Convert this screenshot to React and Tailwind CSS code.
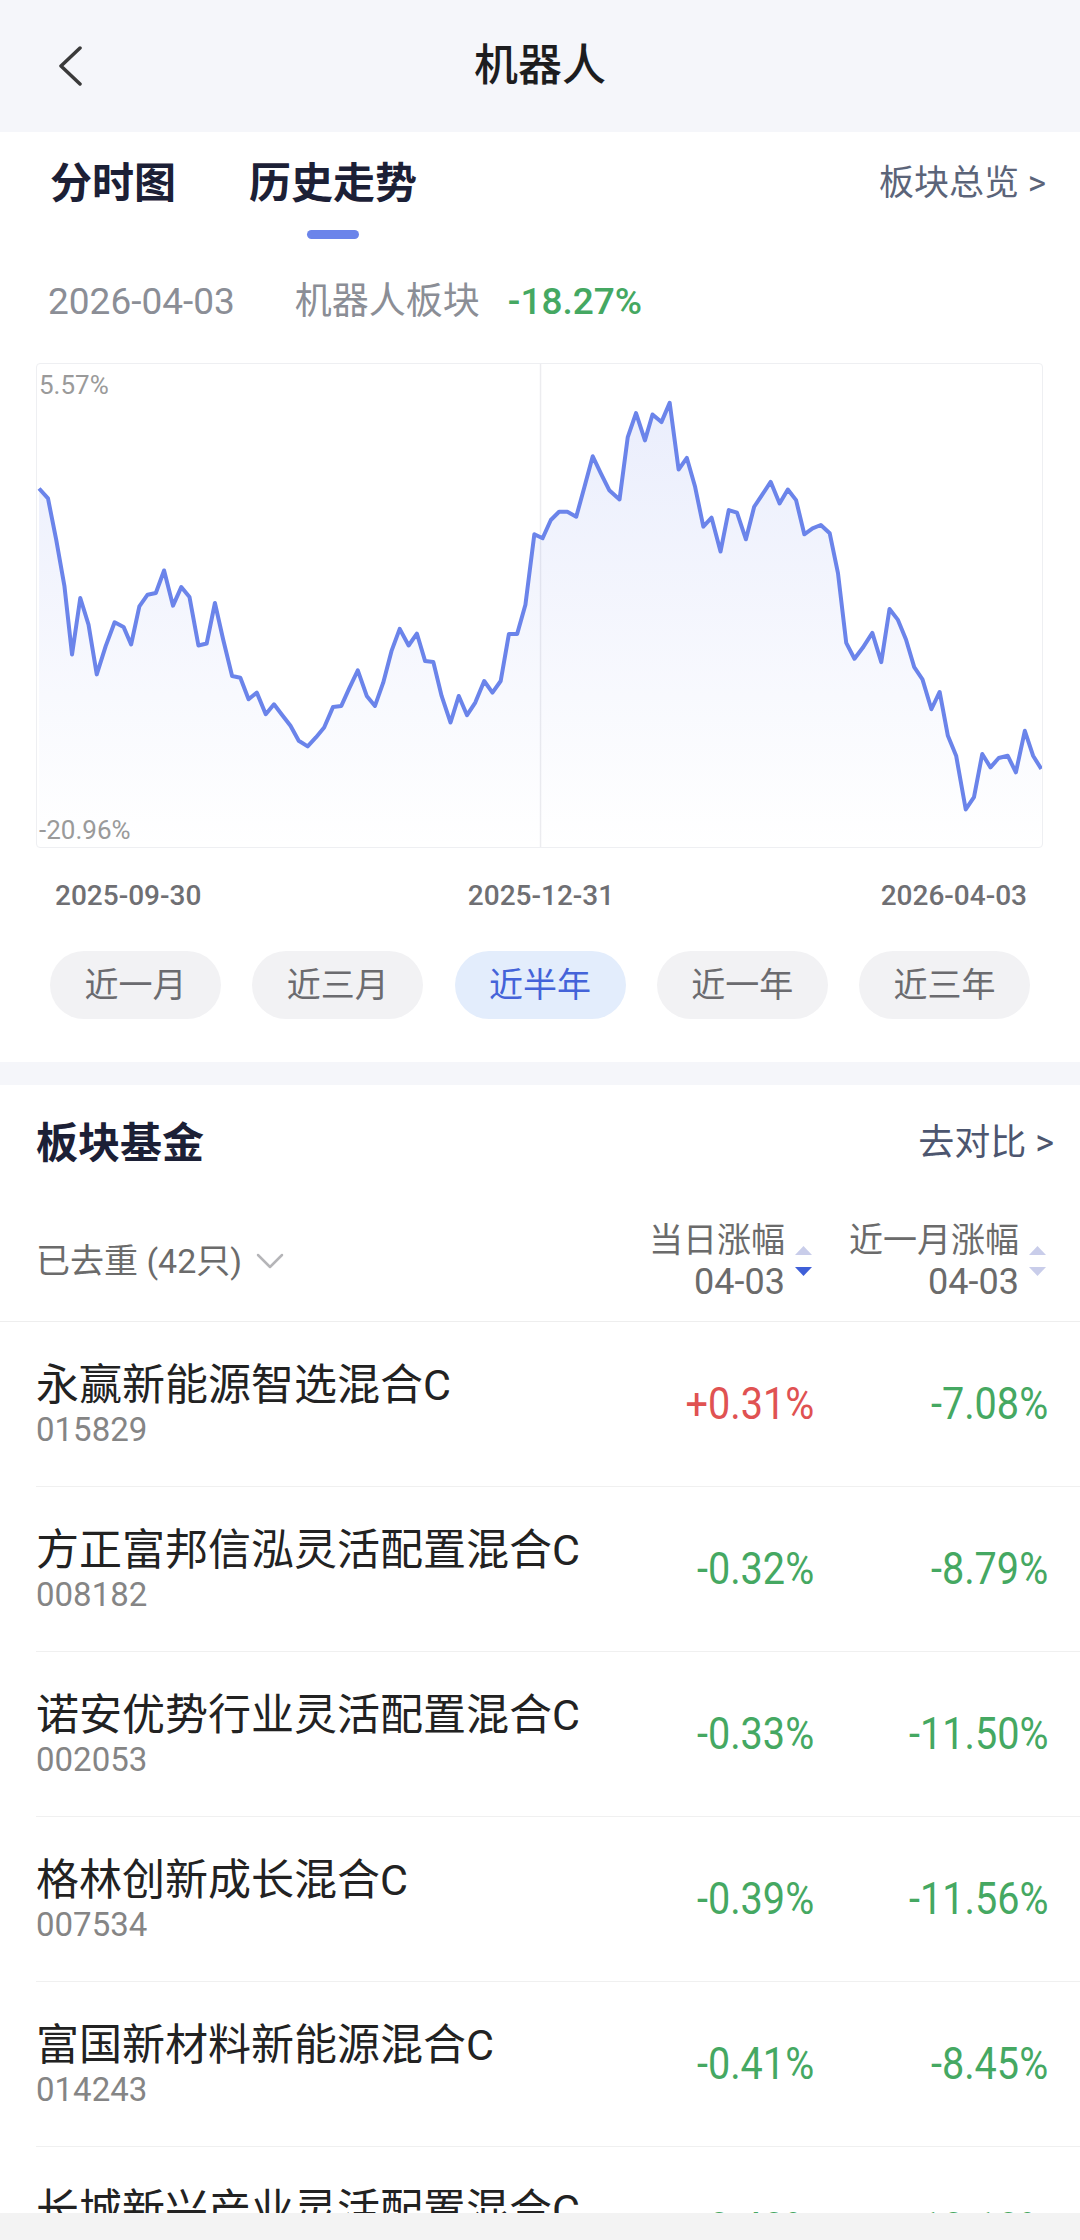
import React from 'react';

const FONT = { fontFamily: 'Roboto, "Noto Sans CJK SC", sans-serif' };

// chart points, traced in a 1463 x 1455 box (x 52..1515, y 70..1525)
const pts = [
  [55, 445], [68, 475], [80, 600], [92, 740], [103, 945], [115, 775], [127, 855], [139, 1005],
  [152, 920], [165, 848], [178, 862], [189, 915], [201, 800], [213, 765], [225, 760], [237, 692],
  [250, 798], [262, 742], [274, 772], [287, 918], [299, 912], [311, 790], [323, 900], [336, 1010],
  [348, 1015], [360, 1080], [372, 1060], [385, 1125], [397, 1095], [408, 1125], [421, 1160], [433, 1205],
  [446, 1222], [458, 1195], [470, 1165], [483, 1103], [495, 1100], [507, 1045], [519, 993], [532, 1070],
  [544, 1100], [556, 1030], [568, 935], [580, 868], [593, 918], [605, 882], [617, 965], [629, 968],
  [641, 1070], [654, 1150], [666, 1070], [678, 1128], [690, 1090], [703, 1025], [715, 1060], [727, 1025],
  [739, 883], [751, 883], [763, 795], [776, 583], [788, 595], [800, 540], [812, 515], [824, 515],
  [837, 530], [849, 440], [861, 348], [873, 400], [885, 450], [900, 478], [912, 290], [924, 218],
  [937, 300], [948, 222], [961, 245], [973, 187], [986, 388], [998, 353], [1010, 440], [1022, 560],
  [1034, 533], [1047, 635], [1059, 510], [1071, 518], [1084, 598], [1096, 500], [1108, 463], [1120, 425],
  [1133, 490], [1145, 448], [1157, 480], [1169, 583], [1181, 565], [1193, 555], [1206, 580], [1218, 700],
  [1230, 910], [1242, 958], [1254, 925], [1268, 880], [1281, 968], [1293, 808], [1305, 840], [1317, 900],
  [1329, 983], [1341, 1020], [1354, 1110], [1366, 1058], [1378, 1190], [1390, 1250], [1404, 1412], [1416, 1375],
  [1428, 1245], [1440, 1285], [1452, 1257], [1465, 1250], [1477, 1300], [1490, 1175], [1502, 1250], [1514, 1290],
];
const linePath = pts.map((p, i) => (i ? 'L' : 'M') + p[0] + ' ' + p[1]).join(' ');
const areaPath = linePath + ' L1514 1525 L55 1525 Z';

const periods = ['近一月', '近三月', '近半年', '近一年', '近三年'];

const funds = [
  { name: '永赢新能源智选混合C', code: '015829', day: '+0.31%', month: '-7.08%' },
  { name: '方正富邦信泓灵活配置混合C', code: '008182', day: '-0.32%', month: '-8.79%' },
  { name: '诺安优势行业灵活配置混合C', code: '002053', day: '-0.33%', month: '-11.50%' },
  { name: '格林创新成长混合C', code: '007534', day: '-0.39%', month: '-11.56%' },
  { name: '富国新材料新能源混合C', code: '014243', day: '-0.41%', month: '-8.45%' },
  { name: '长城新兴产业灵活配置混合C', code: '009981', day: '-0.40%', month: '-10.10%' },
];

function SortArrows({ active }) {
  return (
    <div className="flex flex-col gap-[12px]">
      <svg width="17" height="9" viewBox="0 0 17 9">
        <path d="M8.5 0 L17 9 L0 9 Z" fill="#c9cdea" />
      </svg>
      <svg width="17" height="9" viewBox="0 0 17 9">
        <path d="M0 0 L17 0 L8.5 9 Z" fill={active ? '#3f5fd8' : '#c9cdea'} />
      </svg>
    </div>
  );
}

function Chart() {
  return (
    <div className="relative mx-[36px] mr-[37px] h-[485px] rounded-[4px] border border-[#eeeff2]">
      <svg className="absolute inset-0 h-full w-full" viewBox="52 70 1463 1455" preserveAspectRatio="none">
        <defs>
          <linearGradient id="area" x1="0" y1="0" x2="0" y2="1">
            <stop offset="0%" stopColor="#6b84ea" stopOpacity="0.14" />
            <stop offset="100%" stopColor="#6b84ea" stopOpacity="0" />
          </linearGradient>
        </defs>
        <line x1="785" y1="70" x2="785" y2="1525" stroke="#ececef" strokeWidth="1.5" vectorEffect="non-scaling-stroke" />
        <path d={areaPath} fill="url(#area)" />
        <path d={linePath} fill="none" stroke="#6b84ea" strokeWidth="4" strokeLinejoin="round" vectorEffect="non-scaling-stroke" />
      </svg>
      <span className="absolute left-[2px] top-[6px] text-[26px] leading-[30px] text-[#9a9a9a]">5.57%</span>
      <span className="absolute bottom-[2px] left-[2px] text-[26px] leading-[30px] text-[#9a9a9a]">-20.96%</span>
    </div>
  );
}

export default function App() {
  return (
    <div className="flex h-[2240px] w-[1080px] flex-col overflow-hidden bg-white" style={FONT}>
      {/* top bar */}
      <div className="grid h-[132px] grid-cols-[1fr_auto_1fr] items-center bg-[#f5f6fa]">
        <div className="pl-[58px]">
          <svg width="24" height="40" viewBox="0 0 24 40">
            <path d="M22 2 L3 20 L22 38" fill="none" stroke="#3a3a3a" strokeWidth="3.5" strokeLinecap="round" strokeLinejoin="round" />
          </svg>
        </div>
        <div className="text-[44px] font-medium text-[#1d1d1f]">机器人</div>
        <div />
      </div>

      {/* tabs */}
      <div className="flex items-start justify-between pl-[50px] pr-[34px] pt-[26px]">
        <div className="flex gap-[73px]">
          <div className="text-[42px] font-bold leading-[52px] text-[#1c2036]">分时图</div>
          <div className="flex flex-col items-center">
            <div className="text-[42px] font-bold leading-[52px] text-[#1c2036]">历史走势</div>
            <div className="mt-[20px] h-[9px] w-[52px] rounded-full bg-[#6b84ea]" />
          </div>
        </div>
        <div className="text-[35px] leading-[52px] text-[#5b6479]">板块总览 &gt;</div>
      </div>

      <div className="mt-[43px] flex h-[40px] items-center pl-[48px] text-[37px]">
        <span className="text-[#8b8e96]">2026-04-03</span>
        <span className="ml-[60px] text-[#8b8e96]">机器人板块</span>
        <span className="ml-[28px] font-medium text-[#45a862]">-18.27%</span>
      </div>

      <div className="mt-[41px]">
        <Chart />
      </div>

      <div className="mt-[28px] flex h-[40px] items-center justify-between pl-[55px] pr-[53px] text-[28px] font-medium text-[#6f6f73]">
        <span>2025-09-30</span>
        <span>2025-12-31</span>
        <span>2026-04-03</span>
      </div>

      <div className="mt-[35px] flex justify-between px-[50px]">
        {periods.map((p) => (
          <div
            key={p}
            className={
              p === '近半年'
                ? 'flex h-[68px] w-[171px] items-center justify-center rounded-full bg-[#e3edfc] text-[34px] text-[#4463d9]'
                : 'flex h-[68px] w-[171px] items-center justify-center rounded-full bg-[#f2f2f4] text-[34px] text-[#6b6b6f]'
            }
          >
            {p}
          </div>
        ))}
      </div>

      <div className="mt-[43px] h-[23px] bg-[#f5f6fa]" />

      {/* fund section */}
      <div className="flex h-[116px] items-center justify-between pl-[36px] pr-[26px]">
        <div className="text-[42px] font-bold text-[#1c2036]">板块基金</div>
        <div className="text-[36px] text-[#4d566f]">去对比 &gt;</div>
      </div>

      <div className="flex h-[121px] items-center border-b border-[#eeeeee] pl-[36px] pr-[34px]">
        <div className="flex flex-1 items-center text-[34px] text-[#6b6b6b]">
          <span>已去重 (42只)</span>
          <svg className="ml-[14px]" width="28" height="16" viewBox="0 0 28 16">
            <path d="M2 2 L14 14 L26 2" fill="none" stroke="#b5b5b8" strokeWidth="2.5" strokeLinecap="round" strokeLinejoin="round" />
          </svg>
        </div>
        <div className="flex w-[200px] items-center justify-end gap-[10px]">
          <div className="flex flex-col items-end text-[#6b6b6b]">
            <span className="text-[34px] leading-[42px]">当日涨幅</span>
            <span className="text-[36px] leading-[42px]">04-03</span>
          </div>
          <SortArrows active />
        </div>
        <div className="flex w-[234px] items-center justify-end gap-[10px]">
          <div className="flex flex-col items-end text-[#6b6b6b]">
            <span className="text-[34px] leading-[42px]">近一月涨幅</span>
            <span className="text-[36px] leading-[42px]">04-03</span>
          </div>
          <SortArrows />
        </div>
      </div>

      <div className="flex-1 overflow-hidden">
        {funds.map((f) => (
          <div key={f.code} className="ml-[36px] flex h-[165px] items-center border-b border-[#f0f0f0] pr-[32px]">
            <div className="flex flex-1 flex-col pt-[4px]">
              <span className="text-[43px] leading-[48px] text-[#222222]">{f.name}</span>
              <span className="text-[33px] leading-[42px] text-[#858585]">{f.code}</span>
            </div>
            <div className="w-[200px] text-right">
              <span className={'inline-block origin-right scale-x-[0.88] text-[45px] ' + (f.day.startsWith('+') ? 'text-[#e05252]' : 'text-[#45a862]')}>
                {f.day}
              </span>
            </div>
            <div className="w-[234px] text-right">
              <span className="inline-block origin-right scale-x-[0.88] text-[45px] text-[#45a862]">{f.month}</span>
            </div>
          </div>
        ))}
      </div>

      <div className="h-[27px] bg-[#f3f3f3]" />
    </div>
  );
}
